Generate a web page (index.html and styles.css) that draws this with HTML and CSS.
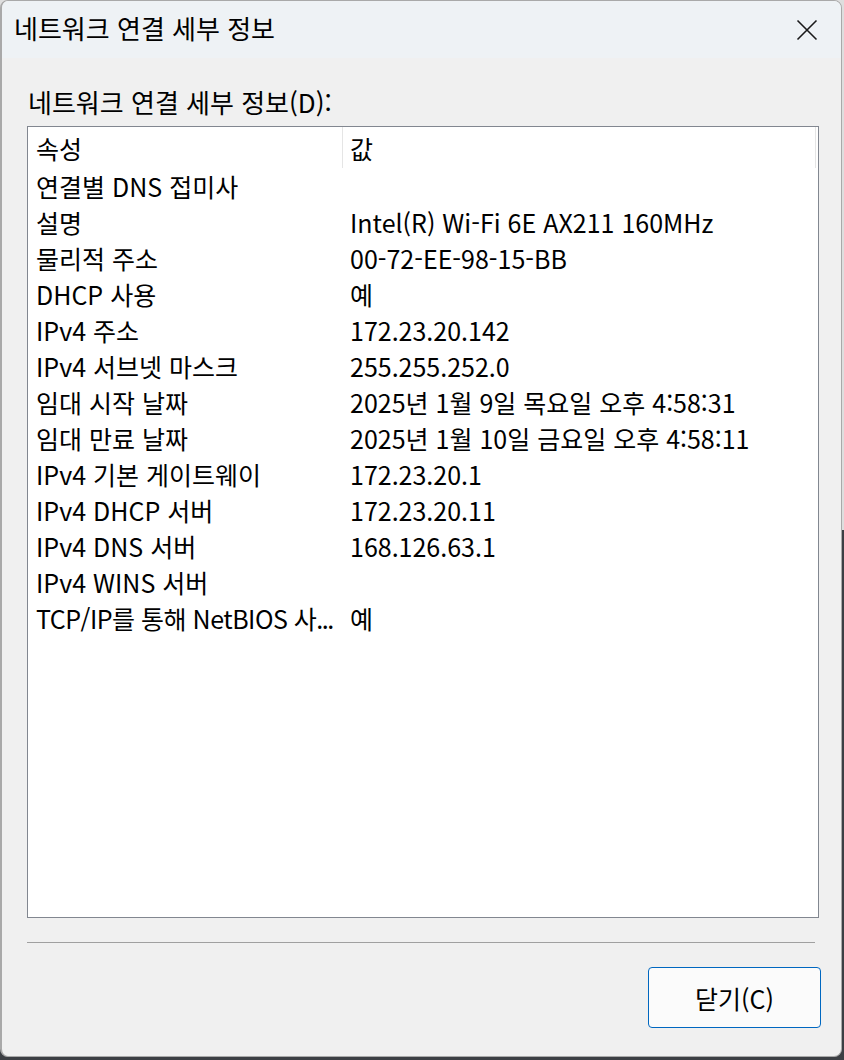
FILE: index.html
```html
<!DOCTYPE html>
<html lang="ko">
<head>
<meta charset="utf-8">
<title>네트워크 연결 세부 정보</title>
<link rel="stylesheet" href="styles.css">
</head>
<body>
<div class="window">
  <div class="titlebar">
    <span class="title">네트워크 연결 세부 정보</span>
    <span class="close" aria-label="닫기">
      <svg width="22" height="22" viewBox="0 0 22 22"><path d="M1.5 1.5 L20.5 20.5 M20.5 1.5 L1.5 20.5" stroke="#1a1a1a" stroke-width="1.6" fill="none"/></svg>
    </span>
  </div>
  <div class="content">
    <div class="label">네트워크 연결 세부 정보(D):</div>
    <div class="listview">
      <div class="lv-header">
        <div class="hcol c1">속성</div>
        <div class="hcol c2">값</div>
      </div>
      <div class="lv-row"><div class="c1">연결별 DNS 접미사</div><div class="c2"></div></div>
      <div class="lv-row"><div class="c1">설명</div><div class="c2">Intel(R) Wi-Fi 6E AX211 160MHz</div></div>
      <div class="lv-row"><div class="c1">물리적 주소</div><div class="c2">00-72-EE-98-15-BB</div></div>
      <div class="lv-row"><div class="c1">DHCP 사용</div><div class="c2">예</div></div>
      <div class="lv-row"><div class="c1">IPv4 주소</div><div class="c2">172.23.20.142</div></div>
      <div class="lv-row"><div class="c1">IPv4 서브넷 마스크</div><div class="c2">255.255.252.0</div></div>
      <div class="lv-row"><div class="c1">임대 시작 날짜</div><div class="c2">2025년 1월 9일 목요일 오후 4:58:31</div></div>
      <div class="lv-row"><div class="c1">임대 만료 날짜</div><div class="c2">2025년 1월 10일 금요일 오후 4:58:11</div></div>
      <div class="lv-row"><div class="c1">IPv4 기본 게이트웨이</div><div class="c2">172.23.20.1</div></div>
      <div class="lv-row"><div class="c1">IPv4 DHCP 서버</div><div class="c2">172.23.20.11</div></div>
      <div class="lv-row"><div class="c1">IPv4 DNS 서버</div><div class="c2">168.126.63.1</div></div>
      <div class="lv-row"><div class="c1">IPv4 WINS 서버</div><div class="c2"></div></div>
      <div class="lv-row"><div class="c1 tight">TCP/IP를 통해 NetBIOS 사<span class="ell">...</span></div><div class="c2">예</div></div>
    </div>
    <div class="sep"></div>
    <div class="footer">
      <button class="btn" type="button">닫기(C)</button>
    </div>
  </div>
</div>
</body>
</html>
```

FILE: styles.css
```css
html, body {
  margin: 0;
  padding: 0;
}
body {
  width: 844px;
  height: 1060px;
  background: linear-gradient(#dedede 0, #dedede 50%, #3c3f44 50%, #3c3f44 100%);
  font-family: "Noto Sans CJK KR", sans-serif;
  color: #000;
  overflow: hidden;
}
.window {
  box-sizing: border-box;
  width: 842px;
  height: 1057px;
  background: #f0f0f0;
  border: 1px solid #a9a9a9;
  border-left-width: 2px;
  border-radius: 8px;
  overflow: hidden;
  display: flex;
  flex-direction: column;
}
.titlebar {
  height: 57px;
  flex: none;
  background: #eef2f5;
  display: flex;
  align-items: center;
  justify-content: space-between;
  padding: 0 23px 0 12px;
}
.title {
  font-size: 26px;
  line-height: 1;
  padding-bottom: 3px;
}
.close {
  display: flex;
  width: 22px;
  height: 22px;
}
.content {
  flex: 1;
  display: flex;
  flex-direction: column;
  padding: 0 22px 0 25px;
}
.label {
  font-size: 26px;
  line-height: 30px;
  margin-top: 29px;
  margin-left: 1px;
  height: 39px;
}
.listview {
  box-sizing: border-box;
  width: 792px;
  height: 792px;
  background: #fff;
  border: 1px solid #828790;
  font-size: 25px;
}
.lv-header {
  display: flex;
  height: 41px;
}
.hcol {
  box-sizing: border-box;
  line-height: 41px;
  padding-top: 1px;
}
.hcol.c1 {
  width: 315px;
  border-right: 1px solid #e5e5e5;
  padding-left: 8px;
}
.hcol.c2 {
  width: 473px;
  border-right: 1px solid #e5e5e5;
  padding-left: 7px;
}
.lv-row {
  display: flex;
  height: 36px;
  line-height: 36px;
  white-space: nowrap;
}
.lv-row .c1 {
  width: 315px;
  padding-left: 8px;
  box-sizing: border-box;
  overflow: hidden;
}
.lv-row .c1.tight {
  letter-spacing: -0.5px;
}
.ell {
  letter-spacing: -1.5px;
}
.lv-row .c2 {
  padding-left: 7px;
}
.sep {
  width: 788px;
  height: 1px;
  background: #a0a0a0;
  margin-top: 24px;
}
.footer {
  display: flex;
  justify-content: flex-end;
  margin-top: 24px;
}
.btn {
  box-sizing: border-box;
  width: 173px;
  height: 61px;
  background: #fbfbfb;
  border: 1px solid #0067c0;
  border-radius: 4px;
  font-family: "Noto Sans CJK KR", sans-serif;
  font-size: 25px;
  color: #000;
  padding: 0;
  margin-right: -2px;
}
```
